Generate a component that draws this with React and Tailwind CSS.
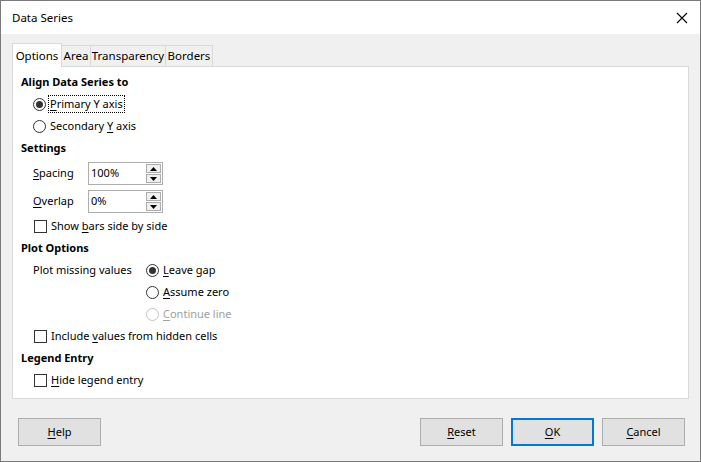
import React from 'react';

const font = { fontFamily: '"Segoe UI", "Noto Sans", sans-serif' };

function U({ children }) {
  return <span className="underline underline-offset-2">{children}</span>;
}

function Radio({ checked, disabled, focus, children }) {
  return (
    <div className={`flex items-center h-[22px] ${disabled ? 'text-[#a0a0a0]' : 'text-black'}`}>
      <span
        className={`w-[13px] h-[13px] rounded-full border flex items-center justify-center bg-white ${
          disabled ? 'border-[#c4c4c4]' : 'border-[#333]'
        }`}
      >
        {checked && <span className="w-[7px] h-[7px] rounded-full bg-[#333]" />}
      </span>
      <span className={`ml-[3px] px-[1px] leading-[16px] ${focus ? 'outline outline-1 outline-dotted outline-black' : ''}`}>
        {children}
      </span>
    </div>
  );
}

function Check({ children }) {
  return (
    <div className="flex items-center h-[22px]">
      <span className="ml-[1px] w-[13px] h-[13px] border border-[#333] bg-white" />
      <span className="ml-[4px]">{children}</span>
    </div>
  );
}

function Spin({ label, value, mt }) {
  return (
    <div className={`flex items-center h-[23px] pl-[12px] ${mt}`}>
      <span className="w-[55px]">{label}</span>
      <div className="w-[75px] h-[23px] border border-[#adadad] bg-white flex items-center justify-between pl-[2px] pr-[1px]">
        <span>{value}</span>
        <div className="flex flex-col gap-[1px]">
          <span className="w-[15px] h-[9px] bg-[#f0f0f0] border border-[#adadad] flex items-center justify-center">
            <svg width="7" height="4" viewBox="0 0 7 4"><path d="M0 4L3.5 0L7 4Z" fill="#000" /></svg>
          </span>
          <span className="w-[15px] h-[9px] bg-[#f0f0f0] border border-[#adadad] flex items-center justify-center">
            <svg width="7" height="4" viewBox="0 0 7 4"><path d="M0 0L3.5 4L7 0Z" fill="#000" /></svg>
          </span>
        </div>
      </div>
    </div>
  );
}

function Heading({ children }) {
  return <div className="h-[22px] flex items-center font-bold">{children}</div>;
}

function Button({ children, primary }) {
  return (
    <button
      className={`w-[83px] h-[28px] bg-[#e1e1e1] flex items-center justify-center ${
        primary ? 'border-2 border-[#0078d7]' : 'border border-[#adadad]'
      }`}
    >
      {children}
    </button>
  );
}

export default function App() {
  return (
    <div className="w-[701px] h-[462px] border border-[#7a7a7a] bg-[#f0f0f0] flex flex-col text-[11px] text-black" style={font}>
      <div className="h-[33px] bg-white flex items-center justify-between pl-[11px] pr-[11px] shrink-0 text-[11.5px]">
        <span>Data Series</span>
        <svg width="12" height="12" viewBox="0 0 12 12" className="mr-[1px]">
          <path d="M1 1L11 11M11 1L1 11" stroke="#000" strokeWidth="1.1" />
        </svg>
      </div>

      <div className="px-[11px] pt-[8px] flex flex-col">
        <div className="flex items-end h-[24px] text-[11.5px]">
          <div className="w-[50px] h-[24px] bg-white border border-[#d9d9d9] border-b-0 flex items-center justify-center relative z-10 -mb-[1px]">
            Options
          </div>
          <div className="w-[29px] h-[21px] border border-[#d9d9d9] border-l-0 border-b-0 flex items-center justify-center">Area</div>
          <div className="w-[75px] h-[21px] border border-[#d9d9d9] border-l-0 border-b-0 flex items-center justify-center">Transparency</div>
          <div className="w-[47px] h-[21px] border border-[#d9d9d9] border-l-0 border-b-0 flex items-center justify-center">Borders</div>
        </div>
        <div className="h-[333px] bg-white border border-[#d9d9d9] pt-[4px] pl-[8px] flex flex-col">
          <Heading>Align Data Series to</Heading>
          <div className="pl-[12px]">
            <Radio checked focus>
              <U>P</U>rimary Y axis
            </Radio>
            <Radio>
              Secondary <U>Y</U> axis
            </Radio>
          </div>
          <Heading>Settings</Heading>
          <Spin label={<><U>S</U>pacing</>} value="100%" mt="mt-[3px]" />
          <Spin label={<><U>O</U>verlap</>} value="0%" mt="mt-[5px]" />
          <div className="pl-[12px] mt-[2px]">
            <Check>
              Show <U>b</U>ars side by side
            </Check>
          </div>
          <Heading>Plot Options</Heading>
          <div className="pl-[12px] flex">
            <div className="w-[113px] h-[22px] flex items-center">Plot missing values</div>
            <div className="flex flex-col">
              <Radio checked>
                <U>L</U>eave gap
              </Radio>
              <Radio>
                <U>A</U>ssume zero
              </Radio>
              <Radio disabled>
                <U>C</U>ontinue line
              </Radio>
            </div>
          </div>
          <div className="pl-[12px]">
            <Check>
              Include <U>v</U>alues from hidden cells
            </Check>
          </div>
          <Heading>Legend Entry</Heading>
          <div className="pl-[12px]">
            <Check>
              <U>H</U>ide legend entry
            </Check>
          </div>
        </div>
      </div>

      <div className="flex items-center justify-between pl-[17px] pr-[15px] mt-[19px]">
        <Button>
          <span><U>H</U>elp</span>
        </Button>
        <div className="flex gap-[8px]">
          <Button>
            <span><U>R</U>eset</span>
          </Button>
          <Button primary>
            <span><U>O</U>K</span>
          </Button>
          <Button>
            <span><U>C</U>ancel</span>
          </Button>
        </div>
      </div>
    </div>
  );
}
